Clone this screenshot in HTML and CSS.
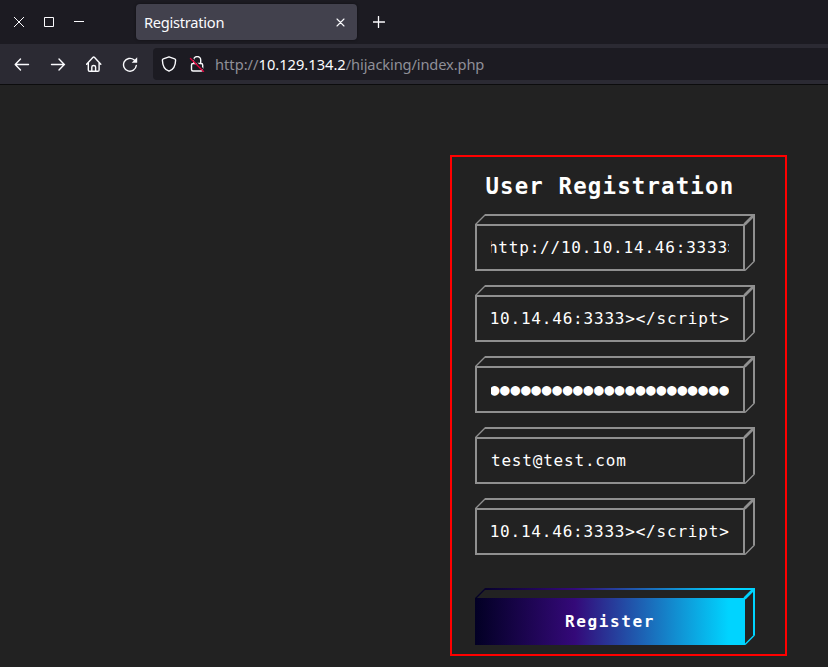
FILE: index.html
```
<!DOCTYPE html>
<html lang="en">
<head>
<meta charset="utf-8">
<title>Registration</title>
<link rel="stylesheet" href="styles.css">
</head>
<body>
<svg class="defs" aria-hidden="true">
  <defs>
    <linearGradient id="glow" gradientUnits="userSpaceOnUse" x1="0" y1="0" x2="270" y2="0">
      <stop offset="0" stop-color="#020024"/>
      <stop offset=".37" stop-color="#340979"/>
      <stop offset=".94" stop-color="#00d4ff"/>
    </linearGradient>
    <symbol id="box" viewBox="0 0 280 57">
      <path d="M1 11H269V56H1zM10 1H279V47" fill="none" stroke-width="2"/>
      <path d="M.5 10.5L10.5.5M270 56.500L279.500 47" fill="none" stroke-width="1.400"/>
      <path d="M269.500 10.500L279 1" fill="none" stroke-width="2.800"/>
    </symbol>
  </defs>
</svg>
<header class="tabs">
  <svg class="window-controls" width="84" height="44" viewBox="0 0 84 44"><path d="M14 17l10 10M24 17L14 27M44.500 17.500h9v9h-9zM74 21.500h10"/></svg>
  <div class="tab"><span>Registration</span><svg width="9" height="9" viewBox="0 0 9 9"><path d="M1 1l7 7M8 1L1 8"/></svg></div>
  <svg class="plus" width="12" height="12" viewBox="0 0 12 12"><path d="M5.500 .5v11M0 6h11.500"/></svg>
</header>
<nav class="toolbar">
  <svg width="16" height="16" viewBox="0 0 16 16"><path d="M14.500 8.500H1.500M6.500 3L1.200 8.500 6.500 14"/></svg>
  <svg width="16" height="16" viewBox="0 0 16 16"><path d="M1.500 8.500h13M9 3l5.300 5.500L9 14"/></svg>
  <svg width="16" height="16" viewBox="0 0 16 16"><path d="M.6 8.200l6.200-6.700q.9-.9 1.800 0l6.200 6.700M2.300 7v7q0 1.300 1.300 1.300h8.200q1.300 0 1.300-1.300V7M5.800 15v-4q0-1.500 1.900-1.500t1.900 1.500v4"/></svg>
  <svg width="16" height="16" viewBox="0 0 16 16"><path d="M14.300 9.500A6.400 6.400 0 1 1 12 3.800l1.500 1"/><path class="solid" d="M15.200 1.200v5.500H9.700z"/></svg>
  <div class="address">
    <svg width="16" height="16" viewBox="0 0 16 16"><path d="M8 .8l5.700 2q1 .3.900 1.400C14.500 9 12.500 13.700 8 15.200 3.500 13.700 1.500 9 1.400 4.200q-.1-1.100.9-1.400z"/></svg>
    <svg width="16" height="16" viewBox="0 0 16 16"><path d="M4.700 7V4a3.500 3.500 0 0 1 7 0v3M4 7.500h8.200q1.500 0 1.500 1.500v4.500q0 1.500-1.500 1.500H4q-1.500 0-1.500-1.500V9q0-1.500 1.500-1.500z"/><path class="ground" d="M3 2l12 12"/><path class="slash" d="M1.500 2.500l13 13"/></svg>
    <span class="url">http://<b>10.129.134.2</b><span class="path">/hijacking/index.php</span></span>
  </div>
</nav>
<main>
  <form class="card">
    <h1>User Registration</h1>
    <div class="field"><svg class="frame"><use href="#box"/></svg><div class="value end clipped"><span>http://10.10.14.46:3333&gt;</span></div></div>
    <div class="field"><svg class="frame"><use href="#box"/></svg><div class="value end"><span>10.14.46:3333&gt;&lt;/script&gt;</span></div></div>
    <div class="field"><svg class="frame"><use href="#box"/></svg><div class="value end dots"><span>●●●●●●●●●●●●●●●●●●●●●●●</span></div></div>
    <div class="field"><svg class="frame"><use href="#box"/></svg><div class="value"><span>test@test.com</span></div></div>
    <div class="field"><svg class="frame"><use href="#box"/></svg><div class="value end"><span>10.14.46:3333&gt;&lt;/script&gt;</span></div></div>
    <div class="field submit"><svg class="frame"><use href="#box"/></svg><button type="button">Register</button></div>
  </form>
</main>
</body>
</html>
```

FILE: styles.css
```
* { box-sizing: border-box; }
body { margin: 0; height: 667px; overflow: hidden; background: #222; color: #fff; }
svg { flex: none; fill: none; stroke: #fbfbfe; stroke-width: 1.4; stroke-linecap: round; stroke-linejoin: round; }
.defs { position: absolute; width: 0; height: 0; }
.tabs { display: flex; align-items: center; height: 44px; background: #1c1b22; font: 14.67px "Noto Sans", sans-serif; }
.window-controls { stroke-width: 1; stroke-linecap: butt; stroke-linejoin: miter; }
.tab { display: flex; align-items: center; justify-content: space-between; width: 221px; height: 36px; margin-left: 52px; padding: 0 12px 0 8px; border-radius: 4px; background: #42414d; box-shadow: 0 0 3px rgba(0,0,0,.45); color: #fbfbfe; letter-spacing: -.27px; }
.tab svg { stroke-width: 1.1; }
.plus { margin-left: 16px; stroke-width: 1.3; }
.toolbar { display: flex; align-items: center; gap: 20px; height: 41px; padding-left: 14px; background: #2b2a33; border-bottom: 1px solid #0c0c0d; }
.toolbar .solid { fill: #fbfbfe; stroke: none; }
.address { flex: 1; display: flex; align-items: center; gap: 12px; height: 32px; margin-left: -5px; padding-left: 8px; border-radius: 4px 0 0 4px; background: #1c1b22; }
.address .ground { stroke: #1c1b22; }
.address .slash { stroke: #e2003d; }
.url { margin-left: -2px; color: #8f8f98; font: 14.67px "Noto Sans", sans-serif; white-space: nowrap; }
.url b { font-weight: 400; color: #fbfbfe; }
.path { letter-spacing: -.13px; }
main { padding: 70px 0 0 450px; }
.card { width: 337px; height: 501px; padding: 14px 0 0 23px; border: 2px solid #f00; font-family: "DejaVu Sans Mono", monospace; }
h1 { width: 270px; margin: 0; padding-left: 10.4px; font-size: 22.4px; line-height: 31px; letter-spacing: 1.16px; white-space: nowrap; }
.field { display: grid; width: 280px; height: 57px; margin-bottom: 14px; }
h1 + .field { margin-top: 12px; }
.frame { grid-area: 1 / 1; width: 280px; height: 57px; stroke: #909090; stroke-linecap: butt; stroke-linejoin: miter; }
.value { grid-area: 1 / 1; display: flex; align-items: center; width: 238px; height: 43px; margin: 12px 0 0 16px; overflow: hidden; font-size: 16px; letter-spacing: .05em; white-space: nowrap; }
.end { justify-content: flex-end; }
.end span { margin-right: -.6px; }
.clipped span { margin-right: -9.3px; }
.submit { margin-top: 33px; }
.submit .frame { stroke: url(#glow); }
button { grid-area: 1 / 1; width: 270px; height: 47px; margin: 10px 0 0; padding: 0; border: 0; background: linear-gradient(90deg, #020024 0%, #340979 37%, #00d4ff 94%); color: #fff; font: bold 16px "DejaVu Sans Mono", monospace; letter-spacing: .1em; }
```
